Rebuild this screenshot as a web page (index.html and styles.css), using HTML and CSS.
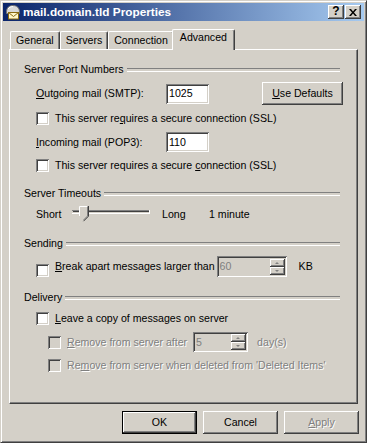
FILE: index.html
```html
<!DOCTYPE html>
<html lang="en">
<head>
    <meta charset="UTF-8">
    <title>mail.domain.tld Properties</title>
    <link rel="stylesheet" href="styles.css">
</head>
<body>
    <div class="window">
        <!-- Title bar -->
        <div class="titlebar">
            <svg class="app-icon" width="16" height="16" viewBox="0 0 16 16">
                <path d="M1.5 8 C1.5 3.5 4.5 1.5 8 1.5 C11.5 1.5 14.5 3.5 14.5 8 L14.5 9.5 L1.5 9.5 Z" fill="#d8d8d8" stroke="#707070"/>
                <path d="M3 5 C4 3.3 6 2.6 8 2.6" fill="none" stroke="#ffffff"/>
                <rect x="3.5" y="8.5" width="10" height="6.5" fill="#fff6c8" stroke="#8a6a10"/>
                <path d="M3.5 8.5 L8.5 12.5 L13.5 8.5" fill="none" stroke="#8a6a10"/>
            </svg>
            <span class="title">mail.domain.tld Properties</span>
            <div class="caption-btns">
                <span class="caption-btn help">?</span>
                <span class="caption-btn close">
                    <svg width="8" height="7" viewBox="0 0 8 7">
                        <path d="M0 0 L2 0 L4 2.5 L6 0 L8 0 L5 3.5 L8 7 L6 7 L4 4.5 L2 7 L0 7 L3 3.5 Z" fill="#000"/>
                    </svg>
                </span>
            </div>
        </div>

        <!-- Tabs -->
        <div class="tabs">
            <div class="tab">General</div>
            <div class="tab">Servers</div>
            <div class="tab">Connection</div>
            <div class="tab active">Advanced</div>
        </div>

        <div class="panel">
            <div class="group-title">Server Port Numbers</div>
            <div class="row row-smtp">
                <span class="field-label"><u>O</u>utgoing mail (SMTP):</span>
                <span class="field port">1025</span>
                <span class="btn btn-defaults"><u>U</u>se Defaults</span>
            </div>
            <div class="row row-check">
                <span class="checkbox"></span>
                <span class="check-text">This server re<u>q</u>uires a secure connection (SSL)</span>
            </div>
            <div class="row row-field">
                <span class="field-label"><u>I</u>ncoming mail (POP3):</span>
                <span class="field port">110</span>
            </div>
            <div class="row row-check">
                <span class="checkbox"></span>
                <span class="check-text">This server requires a secure <u>c</u>onnection (SSL)</span>
            </div>

            <div class="group-title gap-big">Server Timeouts</div>
            <div class="row row-slider">
                <span class="slider-label">Short</span>
                <svg class="slider" width="78" height="20" viewBox="0 0 78 20">
                    <line x1="0" y1="6.5" x2="78" y2="6.5" stroke="#808080"/>
                    <line x1="1" y1="7.5" x2="77" y2="7.5" stroke="#404040"/>
                    <line x1="1" y1="8.5" x2="77" y2="8.5" stroke="#d4d0c8"/>
                    <line x1="0" y1="9.5" x2="78" y2="9.5" stroke="#ffffff"/>
                    <line x1="77.5" y1="6" x2="77.5" y2="10" stroke="#ffffff"/>
                    <path d="M7 2 H16 V12 L11.5 16.5 L7 12 Z" fill="#d4d0c8"/>
                    <path d="M7.5 12 V2.5 H15.5" fill="none" stroke="#ffffff"/>
                    <path d="M15.5 2.5 V12 L11.5 16" fill="none" stroke="#808080"/>
                    <path d="M16.5 2 V12.2 L11.5 17.2" fill="none" stroke="#404040"/>
                </svg>
                <span class="slider-long">Long</span>
                <span>1 minute</span>
            </div>

            <div class="group-title gap-mid">Sending</div>
            <div class="row row-break">
                <span class="checkbox low"></span>
                <span class="check-text"><u>B</u>reak apart messages larger than</span>
                <span class="field spin size-kb disabled">
                    <span class="spin-value">60</span>
                    <span class="spin-btns">
                        <span class="spin-btn"><span class="arrow up"></span></span>
                        <span class="spin-btn"><span class="arrow down"></span></span>
                    </span>
                </span>
                <span class="unit-kb">KB</span>
            </div>

            <div class="group-title gap-del">Delivery</div>
            <div class="row row-check leave">
                <span class="checkbox"></span>
                <span class="check-text"><u>L</u>eave a copy of messages on server</span>
            </div>
            <div class="row row-field sub">
                <span class="checkbox disabled"></span>
                <span class="check-text gray"><u>R</u>emove from server after</span>
                <span class="field spin size-days disabled">
                    <span class="spin-value">5</span>
                    <span class="spin-btns">
                        <span class="spin-btn"><span class="arrow up"></span></span>
                        <span class="spin-btn"><span class="arrow down"></span></span>
                    </span>
                </span>
                <span class="gray unit-days">day(s)</span>
            </div>
            <div class="row row-check sub">
                <span class="checkbox disabled"></span>
                <span class="check-text gray">Re<u>m</u>ove from server when deleted from 'Deleted Items'</span>
            </div>
        </div>

        <div class="buttons">
            <span class="btn btn-default">OK</span>
            <span class="btn">Cancel</span>
            <span class="btn gray"><u>A</u>pply</span>
        </div>
    </div>
</body>
</html>
```

FILE: styles.css
```css
* {
    box-sizing: border-box;
}
body {
    margin: 0;
    font-family: "Liberation Sans", Arial, sans-serif;
    font-size: 10.6px;
    line-height: 13px;
    color: #000;
    background: #d4d0c8;
}
u {
    text-decoration-thickness: 1px;
    text-underline-offset: 1px;
}

/* window frame */
.window {
    width: 367px;
    height: 443px;
    background: #d4d0c8;
    border: 1px solid;
    border-color: #d4d0c8 #404040 #404040 #d4d0c8;
    box-shadow: inset 1px 1px #fff, inset -1px -1px #808080;
    padding: 2px;
    display: flex;
    flex-direction: column;
}
.titlebar {
    height: 18px;
    display: flex;
    align-items: center;
    padding: 0 3px 0 2px;
    background: linear-gradient(to right, #0a246a, #a6caf0);
}
.app-icon {
    flex: none;
}
.title {
    margin-left: 2px;
    color: #fff;
    font-weight: bold;
    font-size: 11.8px;
}
.caption-btns {
    margin-left: auto;
    display: flex;
    gap: 1px;
}
.caption-btn {
    width: 16px;
    height: 14px;
    display: flex;
    align-items: center;
    justify-content: center;
    background: #d4d0c8;
    box-shadow: inset -1px -1px #404040, inset 1px 1px #fff, inset -2px -2px #808080;
}
.caption-btn.help {
    font-weight: bold;
    font-size: 12px;
    padding-bottom: 1px;
}

/* tabs */
.tabs {
    display: flex;
    align-items: flex-end;
    height: 20px;
    margin-top: 8px;
    padding-left: 7px;
}
.tab {
    height: 18px;
    line-height: 17px;
    padding: 0 5px;
    background: #d4d0c8;
    border-top: 1px solid #fff;
    border-left: 1px solid #fff;
    border-right: 1px solid #404040;
    border-radius: 2px 2px 0 0;
    box-shadow: inset -1px 0 #808080;
}
.tab.active {
    height: 21px;
    line-height: 15px;
    padding: 0 7px;
    margin-left: -2px;
    margin-bottom: -1px;
    position: relative;
    z-index: 1;
}

/* tab page */
.panel {
    margin-left: 6px;
    width: 349px;
    height: 355px;
    border: 1px solid;
    border-color: #fff #404040 #404040 #fff;
    box-shadow: inset -1px -1px #808080;
    padding: 0 17px 0 14px;
    display: flex;
    flex-direction: column;
}
.group-title {
    display: flex;
    align-items: center;
    height: 13px;
    margin-top: 13px;
}
.group-title::after {
    content: "";
    flex: 1;
    height: 2px;
    margin-left: 3px;
    border-top: 1px solid #808080;
    border-bottom: 1px solid #fff;
}
.gap-big {
    margin-top: 15px;
}
.gap-mid {
    margin-top: 13px;
}
.gap-del {
    margin-top: 14px;
}
.row {
    display: flex;
    align-items: center;
    padding-left: 12px;
}
.row-smtp {
    height: 23px;
    margin-top: 6px;
}
.row-check {
    height: 13px;
    margin-top: 7px;
}
.row-field {
    height: 20px;
    margin-top: 7px;
}
.row-check.leave {
    margin-top: 8px;
}
.row.sub {
    padding-left: 24px;
}
.field-label {
    width: 130px;
}
.check-text {
    margin-left: 6px;
    white-space: nowrap;
}
.gray {
    color: #808080;
    text-shadow: 1px 1px #fff;
}

/* controls */
.checkbox {
    flex: none;
    width: 13px;
    height: 13px;
    background: #fff;
    box-shadow: inset 1px 1px #808080, inset -1px -1px #fff, inset 2px 2px #404040, inset -2px -2px #d4d0c8;
}
.checkbox.disabled {
    background: #d4d0c8;
}
.checkbox.low {
    align-self: flex-end;
}
.field {
    height: 20px;
    padding: 0 3px;
    display: flex;
    align-items: center;
    background: #fff;
    box-shadow: inset 1px 1px #808080, inset -1px -1px #fff, inset 2px 2px #404040, inset -2px -2px #d4d0c8;
}
.field.port {
    width: 43px;
}
.field.disabled {
    background: #d4d0c8;
    color: #808080;
}
.spin {
    padding: 2px 2px 2px 3px;
}
.spin-value {
    flex: 1;
}
.spin-btns {
    width: 15px;
    height: 16px;
    display: flex;
    flex-direction: column;
}
.spin-btn {
    flex: 1;
    display: flex;
    align-items: center;
    justify-content: center;
    background: #d4d0c8;
    box-shadow: inset -1px -1px #404040, inset 1px 1px #fff, inset -2px -2px #808080;
}
.arrow {
    width: 0;
    height: 0;
    border-left: 2px solid transparent;
    border-right: 2px solid transparent;
    margin-right: 1px;
}
.arrow.up {
    border-bottom: 2px solid #808080;
}
.arrow.down {
    border-top: 2px solid #808080;
}
.size-kb {
    width: 70px;
    height: 21px;
    margin-left: 2px;
}
.unit-kb {
    margin-left: 12px;
}
.size-days {
    width: 55px;
    margin-left: 6px;
}
.unit-days {
    margin-left: 9px;
}
.row-break {
    height: 21px;
    margin-top: 6px;
}
.row-slider {
    height: 20px;
    margin-top: 4px;
}
.slider-label {
    width: 36px;
}
.slider-long {
    margin-left: 12px;
    width: 47px;
}

/* buttons */
.btn {
    width: 75px;
    height: 23px;
    display: flex;
    align-items: center;
    justify-content: center;
    background: #d4d0c8;
    box-shadow: inset -1px -1px #404040, inset 1px 1px #fff, inset -2px -2px #808080;
}
.btn-defaults {
    width: 81px;
    margin-left: auto;
    margin-right: -3px;
}
.btn-default {
    border: 1px solid #000;
}
.buttons {
    display: flex;
    justify-content: flex-end;
    gap: 6px;
    margin-top: 7px;
    padding-right: 5px;
}
```
